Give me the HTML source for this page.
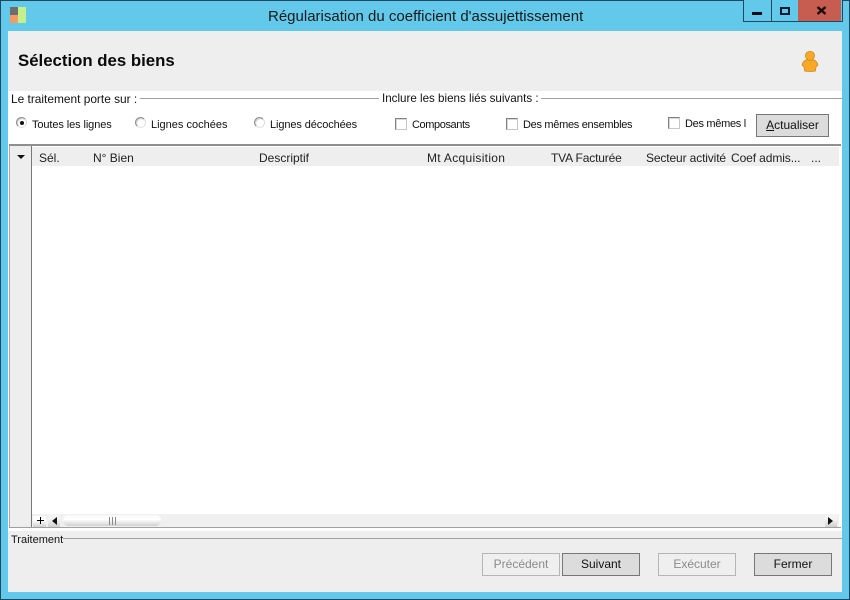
<!DOCTYPE html>
<html lang="fr">
<head>
<meta charset="utf-8">
<title>Régularisation du coefficient d'assujettissement</title>
<style>
html,body{margin:0;padding:0;width:850px;height:600px;overflow:hidden;background:#63c9eb}
body{position:relative;font-family:"Liberation Sans",sans-serif;font-size:11px;color:#111}
.a{position:absolute}
.t{position:absolute;white-space:nowrap;line-height:14px;height:14px}
.n{font-size:11px;letter-spacing:-.3px}
.btn{position:absolute;box-sizing:border-box;height:23px;border:1px solid #777;background:#dcdcdc;text-align:center;line-height:21px;font-size:12px;color:#111}
.btn.off{background:#efefef;border-color:#b5b5b5;color:#8a8a8a}
.r{position:absolute;box-sizing:border-box;width:11px;height:11px;border-radius:50%;border:1px solid;border-color:#8f8f8f #dcdcdc #e4e4e4 #8f8f8f;background:#fff;box-shadow:inset 1px 1px 1px #ccc}
.c{position:absolute;box-sizing:border-box;width:12px;height:12px;border:1px solid;border-color:#808080 #c8c8c8 #c8c8c8 #808080;background:#fff;box-shadow:inset 1px 1px 0 #d8d8d8}
.h{position:absolute;top:151px;white-space:nowrap;line-height:14px;font-size:12px;color:#222}
</style>
</head>
<body>
<div class="a" style="left:0;top:0;width:848px;height:598px;border:1px solid #1d4a60"></div>

<!-- title icon -->
<div class="a" style="left:10px;top:7px;width:8px;height:8px;background:#6e6e6e"></div>
<div class="a" style="left:10px;top:15px;width:8px;height:8px;background:#f59a62"></div>
<div class="a" style="left:18px;top:7px;width:8px;height:16px;background:#c4f08c"></div>
<div class="t" style="left:268px;top:8px;font-size:15px;line-height:17px;height:17px;color:#1a1a1a">Régularisation du coefficient d'assujettissement</div>

<!-- window buttons -->
<div class="a" style="left:743px;top:0;width:98px;height:21px;border:1px solid #1d4a60;border-top:0;background:#63c9eb"></div>
<div class="a" style="left:771px;top:0;width:1px;height:21px;background:#1d4a60"></div>
<div class="a" style="left:798px;top:0;width:43px;height:21px;background:#c75c50"></div>
<div class="a" style="left:752px;top:12px;width:10px;height:3px;background:#000c1a"></div>
<div class="a" style="left:780px;top:7px;width:6px;height:4px;border:2px solid #0a1a30"></div>
<svg class="a" style="left:816px;top:6px" width="11" height="9" viewBox="0 0 11 9"><path d="M1.500 1 L9.500 8 M9.500 1 L1.500 8" stroke="#1a0a08" stroke-width="2.400" fill="none"/></svg>

<!-- content -->
<div class="a" style="left:8px;top:31px;width:834px;height:561px;background:#fff"></div>
<div class="a" style="left:8px;top:31px;width:834px;height:60px;background:#eeeeee"></div>
<div class="t" style="left:18px;top:52px;font-size:16.800px;line-height:18px;height:18px;font-weight:bold;color:#0a0a0a">Sélection des biens</div>

<!-- person icon -->
<svg class="a" style="left:801px;top:50px" width="18" height="22" viewBox="0 0 18 22">
<path d="M5 10 Q9 9 13 10 Q16 11 17 15 L15 17 L14.500 21 Q9 22 3.500 21 L3 17 L1 15 Q2 11 5 10Z" fill="#f7a826" stroke="#c98a20" stroke-width=".7"/>
<circle cx="9" cy="5.800" r="4.600" fill="#f7a826" stroke="#c98a20" stroke-width=".7"/>
</svg>

<!-- group labels -->
<div class="t" style="left:11px;top:92px;font-size:11.900px;">Le traitement porte sur :</div>
<div class="a" style="left:140px;top:98px;width:239px;height:1px;background:#a0a0a0"></div>
<div class="t" style="left:382px;top:92px;font-size:11.600px;">Inclure les biens liés suivants :</div>
<div class="a" style="left:541px;top:98px;width:301px;height:1px;background:#a0a0a0"></div>

<!-- radios -->
<div class="r" style="left:16px;top:117px"></div>
<div class="a" style="left:19.500px;top:120.500px;width:4px;height:4px;border-radius:50%;background:#111"></div>
<div class="t" style="left:32px;top:118px;letter-spacing:-.1px">Toutes les lignes</div>
<div class="r" style="left:135px;top:117px"></div>
<div class="t" style="left:151px;top:118px">Lignes cochées</div>
<div class="r" style="left:254px;top:117px"></div>
<div class="t" style="left:270px;top:118px;letter-spacing:-.1px">Lignes décochées</div>

<!-- checkboxes -->
<div class="c" style="left:395px;top:118px"></div>
<div class="t n" style="left:412px;top:118px;letter-spacing:-.4px">Composants</div>
<div class="c" style="left:506px;top:118px"></div>
<div class="t n" style="left:523px;top:118px">Des mêmes ensembles</div>
<div class="c" style="left:668px;top:117px"></div>
<div class="t n" style="left:685px;top:117px;width:61px;overflow:hidden">Des mêmes l</div>

<div class="btn" style="left:756px;top:114px;width:73px"><u>A</u>ctualiser</div>

<!-- grid -->
<div class="a" style="left:9px;top:144px;width:832px;height:2px;background:#8f8f8f"></div>
<div class="a" style="left:9px;top:146px;width:1px;height:382px;background:#a8a8a8"></div>
<div class="a" style="left:10px;top:146px;width:21px;height:381px;background:#eeeeee"></div>
<div class="a" style="left:31px;top:146px;width:1px;height:381px;background:#777"></div>
<div class="a" style="left:32px;top:147px;width:807px;height:19px;background:#eeeeee"></div>
<svg class="a" style="left:17px;top:155px" width="8" height="4" viewBox="0 0 8 4"><path d="M0 0H8L4 4Z" fill="#111"/></svg>
<div class="h" style="left:39px">Sél.</div>
<div class="h" style="left:93px">N° Bien</div>
<div class="h" style="left:259px">Descriptif</div>
<div class="h" style="left:427px;letter-spacing:.3px">Mt Acquisition</div>
<div class="h" style="left:551px;letter-spacing:-.15px">TVA Facturée</div>
<div class="h" style="left:646px;letter-spacing:-.13px">Secteur activité</div>
<div class="h" style="left:731px;letter-spacing:-.1px">Coef admis...</div>
<div class="h" style="left:811px">...</div>

<!-- scrollbar -->
<div class="a" style="left:32px;top:514px;width:807px;height:13px;background:#f0f0f0"></div>
<div class="a" style="left:33px;top:516px;width:13px;height:11px;background:linear-gradient(#fff,#fff 40%,#cfcfcf)"></div>
<div class="a" style="left:37px;top:520px;width:7px;height:1px;background:#000"></div>
<div class="a" style="left:40px;top:517px;width:1px;height:7px;background:#000"></div>
<div class="a" style="left:48px;top:514px;width:12px;height:13px;background:linear-gradient(#f4f4f4,#f4f4f4 40%,#cfcfcf)"></div>
<svg class="a" style="left:52px;top:517px" width="5" height="8" viewBox="0 0 5 8"><path d="M5 0V8L0 4Z" fill="#111"/></svg>
<div class="a" style="left:63px;top:515px;width:98px;height:11px;border-radius:5px;background:linear-gradient(#f8f8f8,#fff 40%,#d0d0d0)"></div>
<div class="a" style="left:109px;top:517px;width:1px;height:8px;background:#888"></div>
<div class="a" style="left:112px;top:517px;width:1px;height:8px;background:#888"></div>
<div class="a" style="left:115px;top:517px;width:1px;height:8px;background:#888"></div>
<div class="a" style="left:825px;top:514px;width:12px;height:13px;background:linear-gradient(#f4f4f4,#f4f4f4 40%,#cfcfcf)"></div>
<svg class="a" style="left:828px;top:517px" width="5" height="8" viewBox="0 0 5 8"><path d="M0 0V8L5 4Z" fill="#111"/></svg>
<div class="a" style="left:9px;top:527px;width:832px;height:1px;background:#a0a0a0"></div>

<!-- bottom panel -->
<div class="a" style="left:8px;top:531px;width:834px;height:61px;background:#eeeeee"></div>
<div class="t" style="left:11px;top:533px;font-size:11px">Traitement</div>
<div class="a" style="left:63px;top:538px;width:779px;height:1px;background:#a0a0a0"></div>

<div class="btn off" style="left:482px;top:553px;width:78px">Précédent</div>
<div class="btn" style="left:562px;top:553px;width:78px">Suivant</div>
<div class="btn off" style="left:658px;top:553px;width:78px">Exécuter</div>
<div class="btn" style="left:754px;top:553px;width:78px">Fermer</div>
</body>
</html>
